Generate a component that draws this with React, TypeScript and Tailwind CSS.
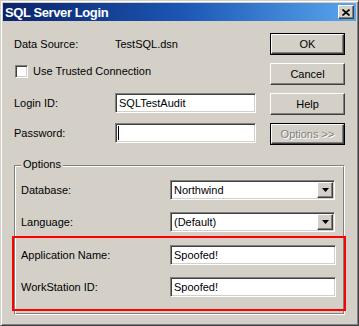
import React from 'react';

const sunken =
  'bg-white border border-t-[#808080] border-l-[#808080] border-b-white border-r-white shadow-[inset_1px_1px_0_#404040,inset_-1px_-1px_0_#d4d0c8]';
const raised =
  'bg-[#d4d0c8] border border-t-white border-l-white border-b-[#404040] border-r-[#404040] shadow-[inset_-1px_-1px_0_#808080]';

function Field({ value, caret }: { value?: string; caret?: boolean }) {
  return (
    <div className={`h-[20px] flex items-center pl-[2px] ${sunken}`}>
      {caret && <span className="w-px h-[14px] bg-black" />}
      {value && <span className="pl-px">{value}</span>}
    </div>
  );
}

function Combo({ value }: { value: string }) {
  return (
    <div className={`h-[20px] w-[165px] flex items-center pl-[2px] pr-px ${sunken}`}>
      <span className="flex-1 pl-px">{value}</span>
      <div className={`w-[16px] h-[16px] flex items-center justify-center ${raised}`}>
        <svg width="7" height="4" viewBox="0 0 7 4">
          <path d="M0 0h7L3.5 4z" fill="#000" />
        </svg>
      </div>
    </div>
  );
}

function Btn({ label, isDefault, disabled }: { label: string; isDefault?: boolean; disabled?: boolean }) {
  const text = disabled ? 'text-[#808080] [text-shadow:1px_1px_0_#fff]' : 'text-black';
  if (isDefault) {
    return (
      <div className="h-[22px] border border-black">
        <div className={`h-full flex items-center justify-center ${raised} ${text}`}>{label}</div>
      </div>
    );
  }
  return <div className={`h-[22px] flex items-center justify-center ${raised} ${text}`}>{label}</div>;
}

export default function App() {
  return (
    <div className="w-[359px] h-[326px] bg-[#d4d0c8] border border-t-[#d4d0c8] border-l-[#d4d0c8] border-b-[#404040] border-r-[#404040] shadow-[inset_1px_1px_0_#fff,inset_-1px_-1px_0_#808080] p-[2px] flex flex-col font-['Liberation_Sans',Arial,sans-serif] text-[11px] text-black leading-[13px]">
      {/* title bar */}
      <div className="h-[18px] flex items-center bg-linear-to-r from-[#0a246a] via-[#1c55b3] to-[#5aa6ee]">
        <span className="flex-1 pl-[2px] text-white font-bold text-[13px] tracking-[-0.4px]">SQL Server Login</span>
        <div className={`w-[16px] h-[14px] mr-[2px] flex items-center justify-center ${raised}`}>
          <svg width="8" height="7" viewBox="0 0 8 7">
            <path d="M0.5 0.5L7.5 6.5M7.5 0.5L0.5 6.5" stroke="#000" strokeWidth="1.6" />
          </svg>
        </div>
      </div>

      <div className="flex-1 flex flex-col pl-[11px] pr-[11px] pt-[12px]">
        <div className="flex justify-between">
          <div className="w-[242px] flex flex-col">
            <div className="h-[22px] flex items-center">
              <span className="w-[101px]">Data Source:</span>
              <span>TestSQL.dsn</span>
            </div>
            <div className="h-[22px] mt-[5px] flex items-center">
              <span className={`ml-px w-[13px] h-[13px] ${sunken}`} />
              <span className="ml-[5px]">Use Trusted Connection</span>
            </div>
            <div className="h-[20px] mt-[11px] flex items-center">
              <span className="w-[101px]">Login ID:</span>
              <div className="flex-1">
                <Field value="SQLTestAudit" />
              </div>
            </div>
            <div className="h-[20px] mt-[10px] flex items-center">
              <span className="w-[101px]">Password:</span>
              <div className="flex-1">
                <Field caret />
              </div>
            </div>
          </div>
          <div className="w-[75px] flex flex-col gap-[8px]">
            <Btn label="OK" isDefault />
            <Btn label="Cancel" />
            <Btn label="Help" />
            <Btn label="Options >>" isDefault disabled />
          </div>
        </div>

        {/* options group */}
        <div className="relative mt-[20px] border border-t-[#808080] border-l-[#808080] border-b-white border-r-white">
          <span className="absolute left-[6px] top-[-8px] px-[2px] bg-[#d4d0c8]">Options</span>
          <div className="border border-t-white border-l-white border-b-[#808080] border-r-[#808080] pt-[13px] flex flex-col">
            <div className="h-[20px] pl-[5px] flex items-center">
              <span className="w-[149px]">Database:</span>
              <Combo value="Northwind" />
            </div>
            <div className="h-[20px] mt-[12px] pl-[5px] flex items-center">
              <span className="w-[149px]">Language:</span>
              <Combo value="(Default)" />
            </div>
            <div className="-ml-[4px] -mr-[3px] mt-[4px] mb-[2px] border-2 border-[#ff0000] pt-[7px] pb-[12px] flex flex-col">
              <div className="h-[20px] pl-[7px] flex items-center">
                <span className="w-[149px]">Application Name:</span>
                <div className="w-[166px]">
                  <Field value="Spoofed!" />
                </div>
              </div>
              <div className="h-[20px] mt-[12px] pl-[7px] flex items-center">
                <span className="w-[149px]">WorkStation ID:</span>
                <div className="w-[166px]">
                  <Field value="Spoofed!" />
                </div>
              </div>
            </div>
          </div>
        </div>
      </div>
    </div>
  );
}
